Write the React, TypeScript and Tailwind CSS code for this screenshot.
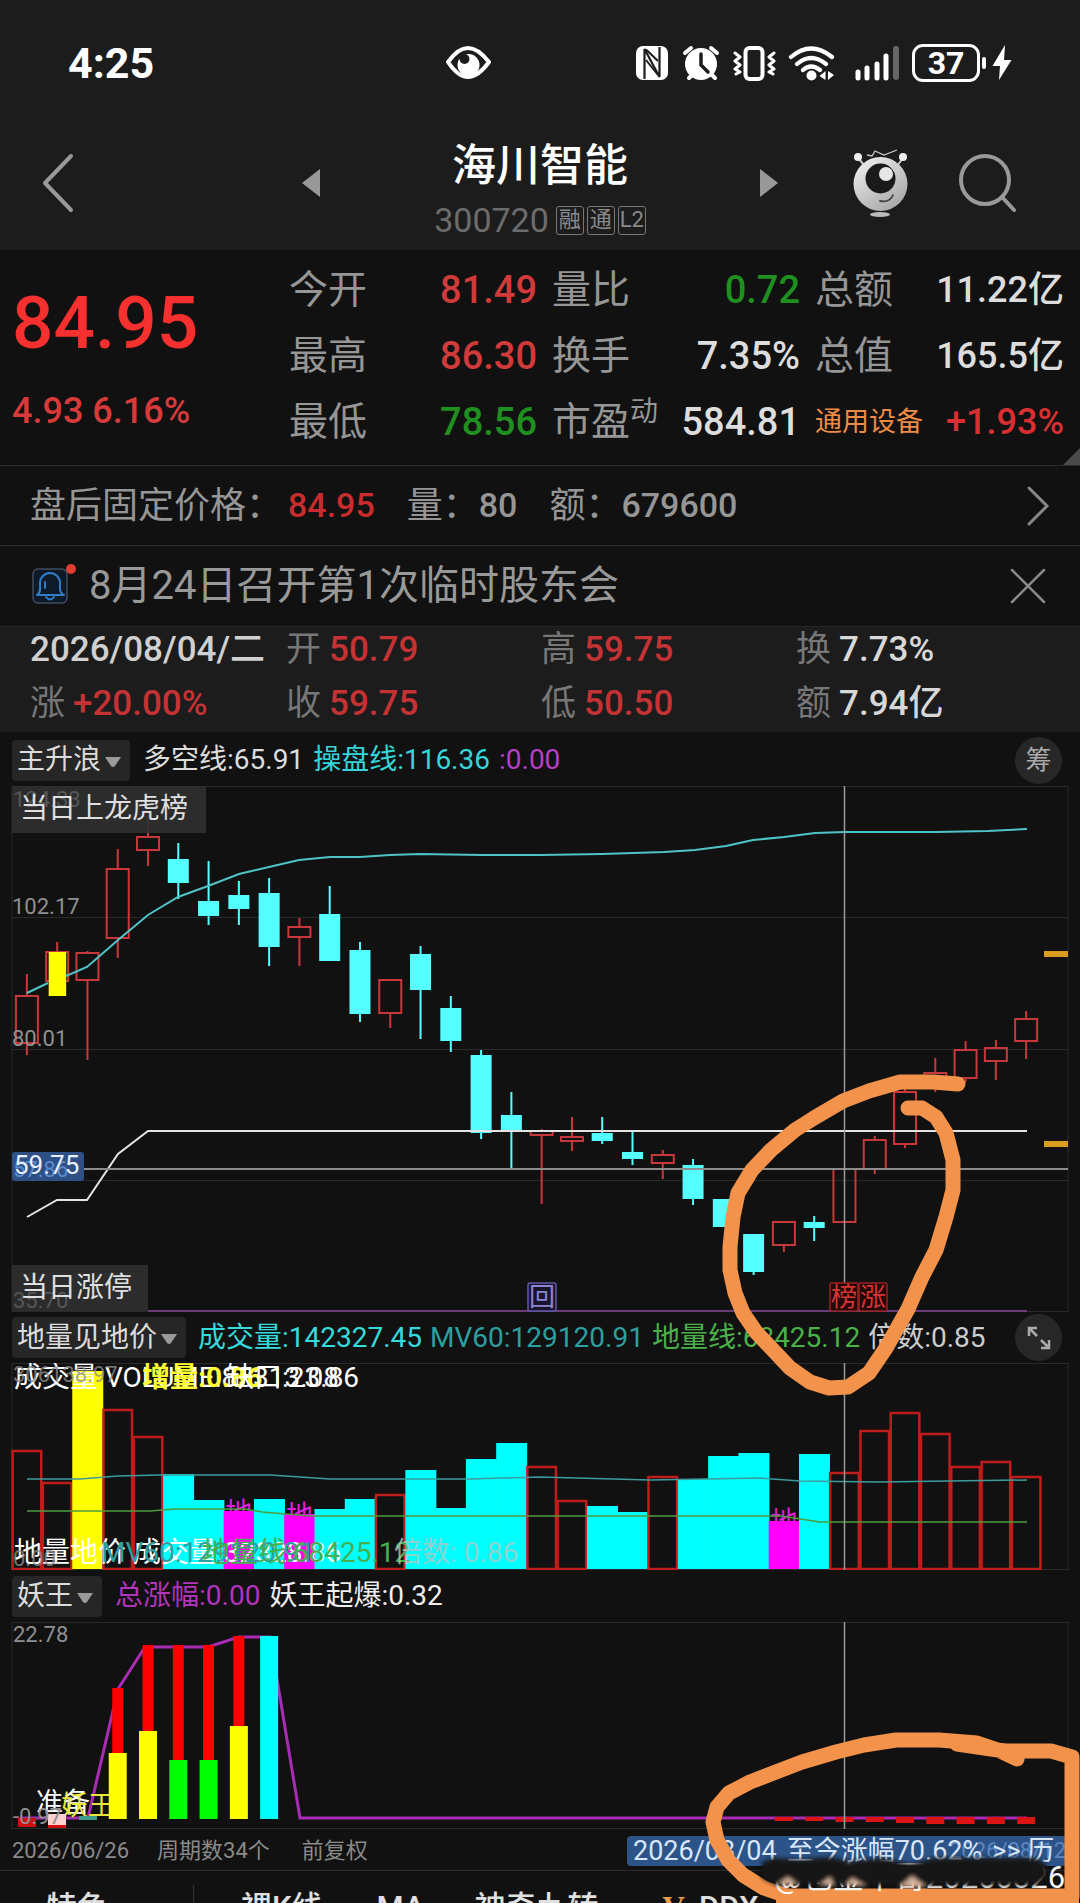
import type { ReactNode } from 'react';

const SANS = "font-[Roboto,'Noto_Sans_CJK_SC',sans-serif]";
const PITCH = 30.28;
const cx = (i: number) => 26.9 + i * PITCH;

type Candle = ['r' | 'c' | 'y', number, number, number, number];

/* kind, high, body top, body bottom, low */
const candles: Candle[] = [
  ['r', 974, 996, 1043, 1055],
  ['y', 942, 952, 981, 981],
  ['r', 951, 953, 980, 1060],
  ['r', 849, 869, 938, 958],
  ['r', 812, 837, 850, 866],
  ['c', 843, 859, 883, 899],
  ['c', 861, 901, 916, 925],
  ['c', 881, 895, 909, 925],
  ['c', 878, 893, 947, 966],
  ['r', 918, 927, 937, 966],
  ['c', 886, 914, 961, 961],
  ['c', 942, 950, 1014, 1022],
  ['r', 980, 980, 1013, 1028],
  ['c', 946, 954, 990, 1039],
  ['c', 996, 1008, 1041, 1052],
  ['c', 1050, 1055, 1133, 1139],
  ['c', 1092, 1115, 1132, 1169],
  ['r', 1129, 1131, 1135, 1204],
  ['r', 1117, 1137, 1141, 1151],
  ['c', 1117, 1133, 1141, 1144],
  ['c', 1132, 1152, 1159, 1165],
  ['r', 1150, 1155, 1163, 1179],
  ['c', 1159, 1165, 1199, 1205],
  ['c', 1199, 1199, 1227, 1227],
  ['c', 1234, 1234, 1272, 1275],
  ['r', 1222, 1222, 1245, 1252],
  ['c', 1216, 1222, 1228, 1241],
  ['r', 1169, 1169, 1222, 1222],
  ['r', 1136, 1140, 1169, 1174],
  ['r', 1089, 1092, 1144, 1148],
  ['r', 1058, 1073, 1085, 1092],
  ['r', 1041, 1050, 1078, 1082],
  ['r', 1040, 1048, 1061, 1080],
  ['r', 1011, 1019, 1041, 1059],
];

/* kind, top of the volume bar */
const volumes: ['r' | 'c' | 'y' | 'm', number][] = [
  ['r', 1451], ['r', 1483], ['y', 1371], ['r', 1410], ['r', 1437], ['c', 1474], ['c', 1500], ['m', 1511],
  ['c', 1499], ['m', 1514], ['c', 1509], ['c', 1499], ['r', 1495], ['c', 1470], ['c', 1508], ['c', 1459],
  ['c', 1443], ['r', 1467], ['r', 1501], ['c', 1506], ['c', 1512], ['r', 1477], ['c', 1479], ['c', 1456],
  ['c', 1453], ['m', 1521], ['c', 1454], ['r', 1473], ['r', 1431], ['r', 1413], ['r', 1434], ['r', 1467],
  ['r', 1462], ['r', 1477],
];

const volumeFill = { c: '#00ffff', y: '#ffff00', m: '#ff00ff', r: 'none' };

function StatusIcons() {
  return (
    <div className="flex items-center text-white">
      <svg className="h-9 w-8" viewBox="636 44 32 36" aria-label="NFC">
        <rect x="636" y="45" width="32" height="34" rx="7" fill="#fff" />
        <path d="M644.500 78V48L659.500 76V46" stroke="#1c1c1c" strokeWidth="2.200" fill="none" />
        <path d="M646 48.500 658 60M646 59 658 74" stroke="#1c1c1c" strokeWidth="2" fill="none" />
      </svg>
      <svg className="ml-3.5 h-9 w-[38px]" viewBox="681 44 38 36" aria-label="闹钟">
        <circle cx="700" cy="63" r="16" fill="#fff" />
        <path d="M684 52 690 47M716 52 710 47M688 77l4-4M714 77l-4-4" stroke="#fff" strokeWidth="4" strokeLinecap="round" />
        <path d="M700 53V64L707 71" stroke="#1c1c1c" strokeWidth="3.5" fill="none" strokeLinecap="round" />
      </svg>
      <svg className="ml-[13px] h-9 w-[43px]" viewBox="732 44 43 36" aria-label="振动">
        <rect x="744.5" y="47" width="17" height="31" rx="4" fill="none" stroke="#fff" strokeWidth="4" />
        <path d="M734 52 739 56 734 60 739 64 734 68 739 71 735 73M773 52 768 56 773 60 768 64 773 68 768 71 772 73" stroke="#fff" strokeWidth="3" fill="none" strokeLinecap="round" strokeLinejoin="round" />
      </svg>
      <svg className="ml-3 h-9 w-[47px]" viewBox="787 44 47 36" aria-label="无线网络">
        <path d="M790 56q20-17 41 0M796 63q14-12 29 0M802 69q8-7 17 0" stroke="#fff" strokeWidth="4.2" fill="none" strokeLinecap="round" />
        <circle cx="810.5" cy="74.500" r="5" fill="#fff" />
        <path d="M824.500 70v9l-6-4ZM827 79V70l6 4Z" fill="#fff" />
      </svg>
      <svg className="ml-5 h-9 w-[45px]" viewBox="854 44 45 36" aria-label="信号">
        <path d="M857 71V77M866 67V77M876 63V77M885 55V77" stroke="#fff" strokeWidth="5" strokeLinecap="round" />
        <path d="M895 48V76" stroke="#666" strokeWidth="6" strokeLinecap="round" />
      </svg>
      <span className="ml-3 flex h-[38px] w-[68px] items-center justify-center rounded-[11px] border-[3px] border-white text-[32px] leading-8 font-bold">
        37
      </span>
      <span className="ml-0.5 h-3 w-1 rounded-full bg-white" />
      <svg className="ml-1.5 h-9 w-5" viewBox="992 44 20 36" aria-label="充电">
        <path d="M1005 44 992.500 65H1000L999 79 1011.500 59H1004Z" fill="#fff" />
      </svg>
    </div>
  );
}

function Mascot() {
  return (
    <svg className="h-[70px] w-14" viewBox="852 147 56 70" aria-hidden="true">
      <defs>
        <linearGradient id="ball" x1="0" y1="0" x2="0.7" y2="1">
          <stop offset="0" stopColor="#f4f4f4" />
          <stop offset="1" stopColor="#a8a8a8" />
        </linearGradient>
      </defs>
      <path d="M867 154l5 1 3-5 9 4 13-5" stroke="#c8c8c8" strokeWidth="1.300" fill="none" />
      <path d="M858 157 865 165M903 157 897 165" stroke="#ccc" strokeWidth="2" />
      <circle cx="858" cy="156" r="4" fill="#eee" />
      <circle cx="903" cy="156" r="4" fill="#eee" />
      <ellipse cx="880" cy="213.500" rx="10" ry="2.600" fill="#bbb" />
      <circle cx="880.5" cy="183" r="27" fill="url(#ball)" />
      <circle cx="880.5" cy="177.500" r="15" fill="#1a1a1a" />
      <circle cx="886" cy="173" r="7" fill="#e6e6e6" />
      <path d="M880 200q10 2 13-6" stroke="#444" strokeWidth="1.800" fill="none" strokeLinecap="round" />
    </svg>
  );
}

function Quote({ label, children, tone, sup }: { label: string; children: ReactNode; tone: string; sup?: string }) {
  return (
    <div className="flex items-center justify-between">
      <dt className="flex text-[39px] leading-[66px] text-[#969696]">
        {label}
        {sup && <span className="text-[28px] leading-[46px]">{sup}</span>}
      </dt>
      <dd className={tone}>{children}</dd>
    </div>
  );
}

function Picker({ label, value }: { label: string; value: string }) {
  return (
    <label className="relative flex h-[41px] shrink-0 rounded bg-[#262626]">
      <span className="sr-only">{label}</span>
      <select className="appearance-none bg-transparent pr-7 pl-[5px] text-[28px] leading-[40px] text-[#dcdcdc]">
        <option>{value}</option>
      </select>
      <svg className="pointer-events-none absolute top-4 right-2 h-3 w-[18px]" viewBox="0 0 18 12" aria-hidden="true">
        <path d="M1 1H17L11 10Q9 12 7 10Z" fill="#9a9a9a" />
      </svg>
    </label>
  );
}

function Frame({ y, h, label, children }: { y: number; h: number; label: string; children: ReactNode }) {
  return (
    <svg className={`block h-auto w-full ${SANS}`} viewBox={`0 ${y} 1080 ${h}`} role="img" aria-label={label}>
      <rect x="12" y={y + 0.5} width="1056" height={h - 1} fill="none" stroke="#2a2a2a" />
      {children}
      <path d={`M844.500 ${y}V${y + h}`} stroke="#9a9a9a" strokeWidth="1.500" />
    </svg>
  );
}

function PriceChart() {
  return (
    <Frame y={786} h={526} label="主升浪">
      <path d="M12 917.500H1068M12 1049.500H1068M12 1180.500H1068" stroke="#2a2a2a" />
      {candles.map(([k, hi, top, bot, lo], i) => {
        const x = cx(i);
        const color = k === 'c' ? '#55ffff' : '#c8383a';
        return (
          <g key={i} stroke={color} strokeWidth="2">
            <path d={`M${x} ${hi}V${top}M${x} ${bot}V${lo}`} />
            {k === 'c' ? (
              <rect x={x - 10.5} y={top} width="21" height={bot - top} fill="#55ffff" stroke="none" />
            ) : (
              <rect x={x - 11} y={top} width="22" height={bot - top} fill="none" />
            )}
            {k === 'y' && <rect x={x - 8.5} y={top} width="17.500" height="44" fill="#ffff00" stroke="none" />}
          </g>
        );
      })}
      <path
        d="M27 993 48 983M66 976 87 967 118 940 148 915 178 897 208 886 239 874 269 867 299 860 330 857H360L390 855 420 854 482 855H540L602 854 664 852 695 850 726 846 753 840 784 837 815 833 845 832H936L988 831 1027 829"
        fill="none" stroke="#4fc4c8" strokeWidth="2"
      />
      <path d="M27 1217 57 1200H87L118 1154 148 1131H1027" fill="none" stroke="#e4e4e4" strokeWidth="2" />
      <path d="M12 1169H1068" stroke="#8c8c8c" strokeWidth="2" />
      <path d="M148 1311H1027" stroke="#6a3c78" strokeWidth="2" />
      <path d="M1044 954H1068M1044 1144H1068" stroke="#dc9c1e" strokeWidth="6" />
      <g fill="#909090" fontSize="22">
        <text x="12" y="914">102.17</text>
        <text x="12" y="1046">80.01</text>
      </g>
      <rect x="12" y="1152" width="72" height="29" rx="3" fill="#2e5084" />
      <text x="13" y="1177" fontSize="22" fill="#5b8bd0">57.86</text>
      <text x="14" y="1174" fontSize="26" fill="#e8f0ff">59.75</text>
      <rect x="12" y="786" width="194" height="47" fill="#303030" fillOpacity="0.9" />
      <text x="13" y="807" fontSize="22" fill="#565656">124.33</text>
      <text x="20" y="818" fontSize="28" fill="#e0e0e0">当日上龙虎榜</text>
      <rect x="12" y="1265" width="136" height="46" fill="#303030" fillOpacity="0.9" />
      <text x="13" y="1308" fontSize="22" fill="#565656">35.70</text>
      <text x="20" y="1297" fontSize="28" fill="#e0e0e0">当日涨停</text>
      <rect x="528" y="1283" width="28" height="28" rx="2" fill="#17142c" stroke="#6358a8" strokeWidth="1.500" />
      <text x="542" y="1306" fontSize="26" textAnchor="middle" fill="#8d84d4">回</text>
    </Frame>
  );
}

function VolumeChart() {
  return (
    <Frame y={1363} h={207} label="地量见地价">
      <g fontSize="27" fill="#e020e0" textAnchor="middle">
        <text x={cx(7)} y="1522">地</text>
        <text x={cx(9)} y="1525">地</text>
        <text x={cx(25)} y="1531">地</text>
      </g>
      {volumes.map(([k, top], i) => (
        <rect
          key={i}
          x={k === 'r' ? cx(i) - 14.3 : cx(i) - 15.2}
          y={top}
          width={k === 'r' ? 28.6 : 31}
          height={1569 - top}
          fill={volumeFill[k]}
          stroke={k === 'r' ? '#c01c1c' : 'none'}
          strokeWidth="2.500"
        />
      ))}
      <path d="M27 1479H80L118 1476 160 1475H270L330 1479H470L540 1477 650 1480 760 1478 800 1481 880 1482 1027 1480" fill="none" stroke="#3c9c9c" strokeWidth="1.500" />
      <path d="M27 1511H150L175 1509H245L262 1512 310 1516H781L820 1522H1027" fill="none" stroke="#4c9c3c" strokeWidth="1.500" />
      <g fontSize="28">
        <text x="14" y="1387" fill="#ffffff">成交量 VOLUME:85313.08</text>
        <text x="142" y="1387" fill="#ffff30" fontWeight="700">增量:0.86</text>
        <text x="226" y="1387" fill="#ffffff">缺口:23.86</text>
        <text x="14" y="1562" fill="#ffffff">地量地价 成交量:32328.86</text>
        <text x="101" y="1562" fill="#2f9fa0">MV60:129120.91</text>
        <text x="202" y="1562" fill="#44b050">地量线:68425.12</text>
        <text x="394" y="1562" fill="#b0c8c4" fillOpacity="0.8">倍数: 0.86</text>
      </g>
      <g fontSize="22" fill="#8c8c8c" fillOpacity="0.8">
        <text x="13" y="1382">306138.97</text>
        <text x="13" y="1566">0.00</text>
      </g>
    </Frame>
  );
}

function MonsterChart() {
  const stacks: [number, number, number, string][] = [
    [3, 1688, 1753, '#ffff00'],
    [4, 1645, 1731, '#ffff00'],
    [5, 1645, 1760, '#00ff00'],
    [6, 1645, 1760, '#00ff00'],
    [7, 1636, 1726, '#ffff00'],
  ];
  return (
    <Frame y={1622} h={207} label="妖王">
      <path d="M20 1818H88L118 1689 145 1647H208L239 1637H270L300 1818H1027" fill="none" stroke="#a82cb4" strokeWidth="3" />
      <text x="36" y="1812" fontSize="27" fill="#ffffff">准备</text>
      <text x="61" y="1815" fontSize="27" fill="#e8e83c">妖王</text>
      {stacks.map(([i, red, low, color]) => (
        <g key={i}>
          <rect x={cx(i) - 5.5} y={red} width="11" height={low - red} fill="#ff0000" />
          <rect x={cx(i) - 9} y={low} width="18" height={1819 - low} fill={color} />
        </g>
      ))}
      <rect x={cx(8) - 9} y="1636" width="18" height="183" fill="#00ffff" />
      <rect x="18" y="1818" width="18" height="9" fill="#d01010" />
      <rect x="48" y="1814" width="18" height="13" fill="#ffd0d0" />
      <rect x="48" y="1825" width="18" height="3" fill="#d01010" />
      <rect x="79" y="1816" width="18" height="4" fill="#3c9c8c" />
      {[4, 4, 5, 5, 6, 7, 7, 7, 7].map((h, k) => (
        <rect key={k} x={cx(25 + k) - 9} y="1817" width="18" height={h} fill="#dc1414" />
      ))}
      <text x="13" y="1642" fontSize="22" fill="#909090">22.78</text>
      <text x="13" y="1824" fontSize="22" fill="#909090">-0.97</text>
    </Frame>
  );
}

function Annotations() {
  return (
    <svg className={`pointer-events-none absolute inset-0 h-full w-full ${SANS}`} viewBox="0 732 1080 1171" aria-hidden="true">
      <defs>
        <filter id="smudge" x="-5%" y="-50%" width="110%" height="200%">
          <feGaussianBlur stdDeviation="2" />
        </filter>
      </defs>
      <g fontSize="26" fill="#d83434">
        <rect x="830" y="1283" width="28" height="28" rx="2" fill="#240808" stroke="#9a2020" strokeWidth="1.500" />
        <rect x="859" y="1283" width="28" height="28" rx="2" fill="#240808" stroke="#9a2020" strokeWidth="1.500" />
        <text x="831" y="1306">榜</text>
        <text x="860" y="1306">涨</text>
      </g>
      <g fill="none" stroke="#f3924a" strokeWidth="15" strokeLinecap="round" strokeLinejoin="round">
        <path d="M958 1084 933 1082H900L869 1091 843 1101 814 1118 795 1130 771 1150 752 1170 738 1193 733 1217 730 1247V1270L735 1293 743 1313 756 1332 790 1368 810 1382 829 1388 848 1387 869 1373 886 1348 908 1309 922 1277 936 1250 946 1217 953 1190V1160L946 1133 936 1117 922 1108H908" />
        <path d="M1017 1759 998 1750 977 1743 939 1740H896L864 1745 836 1752 802 1762 750 1782 729 1793 717 1807 713 1822 717 1840 728 1860 743 1875 764 1888 790 1897H1072V1757L1051 1751H1005L957 1744" />
      </g>
      <path d="M776 1896H1079" stroke="#f3924a" strokeWidth="15" />
      <text x="774" y="1888" fontSize="31" fill="#f8f8f8">@也金牛哥20250326</text>
      <g filter="url(#smudge)">
        <path d="M762 1862 775 1858 800 1860 830 1857 850 1862 880 1858 910 1864 935 1858H1035L1046 1864 1048 1876 1036 1885H776L762 1878Z" fill="#141414" />
        <path d="M778 1884 788 1877 798 1885ZM820 1885 830 1877 834 1886ZM846 1885 852 1878 866 1886ZM900 1887 912 1876 926 1887Z" fill="#d8b49c" />
      </g>
    </svg>
  );
}

export default function App() {
  return (
    <main className={`min-h-screen overflow-hidden bg-[#111111] text-[#dddddd] ${SANS}`}>
      <header className="bg-[#1c1c1c]">
        <div className="grid h-[126px] grid-cols-[378px_1fr_auto] items-center pr-[68px] pl-[68px]">
          <time className="text-[43px] leading-none font-bold text-white">4:25</time>
          <svg className="h-[34px] w-[46px]" viewBox="446 46 46 34" aria-hidden="true">
            <path d="M448 62Q458 48 468 48T489 62Q478 77 468 77T448 62Z" fill="none" stroke="#fff" strokeWidth="4" strokeLinejoin="round" />
            <circle cx="468.5" cy="65" r="11" fill="#fff" />
            <circle cx="464.500" cy="59" r="5" fill="#1c1c1c" />
          </svg>
          <StatusIcons />
        </div>
        <div className="grid h-[124px] grid-cols-[1fr_476px_1fr] content-start items-center">
          <button aria-label="返回" className="ml-10 w-9">
            <svg className="h-[60px] w-9" viewBox="0 0 36 60" aria-hidden="true">
              <path d="M31 3 5 30 31 57" fill="none" stroke="#999" strokeWidth="4" strokeLinecap="round" strokeLinejoin="round" />
            </svg>
          </button>
          <div className="flex items-center justify-between">
            <button aria-label="上一只">
              <svg className="h-7 w-[18px]" viewBox="0 0 18 28"><path d="M18 0V28L0 14Z" fill="#999" /></svg>
            </button>
            <div className="mt-3 flex flex-col items-center">
              <h1 className="text-[44px] leading-[56px] font-medium text-white">海川智能</h1>
              <div className="mt-1.5 flex h-10 items-center gap-[3px] text-[34px] text-[#6c6c6c]">
                <span className="mr-1">300720</span>
                {['融', '通', 'L2'].map((t) => (
                  <span key={t} className="flex h-[29px] w-7 items-center justify-center rounded-[3px] border border-[#777] text-[22px] leading-6 text-[#8a8a8a]">
                    {t}
                  </span>
                ))}
              </div>
            </div>
            <button aria-label="下一只">
              <svg className="h-7 w-[18px]" viewBox="0 0 18 28"><path d="M0 0V28L18 14Z" fill="#999" /></svg>
            </button>
          </div>
          <div className="flex items-center justify-end gap-[50px] pr-16">
            <button aria-label="智能助手"><Mascot /></button>
            <button aria-label="搜索">
              <svg className="h-[60px] w-[58px]" viewBox="0 0 58 60" fill="none" stroke="#999" strokeWidth="4" strokeLinecap="round">
                <circle cx="27" cy="27" r="24" />
                <path d="M44 44 56 57" />
              </svg>
            </button>
          </div>
        </div>
      </header>

      <section className="relative flex h-[216px] border-b border-[#2b2b2b] pt-[7px]">
        <div className="w-[289px] shrink-0 pl-3 text-[#f5302e]">
          <p className="pt-7 text-[73px] leading-[76px] font-medium">84.95</p>
          <p className="mt-7 text-[36px] leading-[44px] font-medium text-[#d83a3a]">4.93 6.16%</p>
        </div>
        <dl className="grid flex-1 grid-cols-[248fr_248fr_249fr] content-start gap-x-[15px] pr-4 text-[38px] leading-[66px] [&_dd]:font-medium">
          <Quote label="今开" tone="text-[#d03a3a]">81.49</Quote>
          <Quote label="量比" tone="text-[#1f8f1f]">0.72</Quote>
          <Quote label="总额" tone="text-[36px]">11.22亿</Quote>
          <Quote label="最高" tone="text-[#d03a3a]">86.30</Quote>
          <Quote label="换手" tone="">7.35%</Quote>
          <Quote label="总值" tone="text-[36px]">165.5亿</Quote>
          <Quote label="最低" tone="text-[#1f8f1f]">78.56</Quote>
          <Quote label="市盈" sup="动" tone="">584.81</Quote>
          <div className="flex items-center justify-between">
            <dt className="text-[27px] text-[#ee8b44]"><a href="#sector">通用设备</a></dt>
            <dd className="text-[36px] text-[#d92f33]">+1.93%</dd>
          </div>
        </dl>
        <svg className="absolute right-0 bottom-0 size-[17px]" viewBox="0 0 17 17" aria-hidden="true"><path d="M17 0V17H0Z" fill="#4a4a4a" /></svg>
      </section>

      <a href="#after-hours" className="flex h-20 items-center border-b border-[#2b2b2b] pr-[30px] pl-[30px] text-[36px] text-[#969696]">
        <span>盘后固定价格：</span>
        <span className="ml-1.5 text-[34px] font-medium text-[#c92c2e]">84.95</span>
        <span className="ml-8">量：</span>
        <span className="text-[34px] font-medium">80</span>
        <span className="ml-8">额：</span>
        <span className="text-[34px] font-medium">679600</span>
        <svg className="ml-auto h-10 w-6" viewBox="0 0 24 40" aria-hidden="true">
          <path d="M3 2 21 20 3 38" fill="none" stroke="#888" strokeWidth="3" strokeLinecap="round" />
        </svg>
      </a>

      <div className="flex h-20 items-center pr-[34px] pl-8">
        <span className="relative">
          <svg className="size-9" viewBox="0 0 36 36" fill="none" aria-hidden="true">
            <rect x="1" y="1" width="34" height="34" rx="5" fill="#0f1a28" stroke="#3f4c5c" strokeWidth="1.500" />
            <path d="M5 27C9 25 8 20 8 15a10 10 0 0 1 20 0c0 5-1 10 4 12Z" stroke="#2f7cc8" strokeWidth="2" strokeLinejoin="round" />
            <path d="M13 14V20M14 29q4 5 8 0" stroke="#2f7cc8" strokeWidth="2" strokeLinecap="round" />
          </svg>
          <span className="absolute -top-1 -right-2 size-2.5 rounded-full bg-[#e03c34]" />
        </span>
        <p className="ml-[21px] text-[40px] leading-none text-[#999999]">8月24日召开第1次临时股东会</p>
        <button aria-label="关闭" className="ml-auto">
          <svg className="size-9" viewBox="0 0 36 36"><path d="M2 2 34 34M34 2 2 34" stroke="#888" strokeWidth="2.500" strokeLinecap="round" /></svg>
        </button>
      </div>

      <dl className="grid h-[106px] grid-cols-[256px_255px_255px_1fr] content-start gap-y-2 border-t border-[#262626] bg-[#1c1c1c] pl-[30px] text-[35px] leading-[46px] text-[#c43234] [&_dd]:font-medium [&_dt]:text-[#777] [&>div]:flex [&>div]:gap-2 [&>div]:whitespace-nowrap">
        <div><dd className="text-[#d0d0d0]">2026/08/04/二</dd></div>
        <div><dt>开</dt><dd>50.79</dd></div>
        <div><dt>高</dt><dd>59.75</dd></div>
        <div><dt>换</dt><dd className="text-[#d8d8d8]">7.73%</dd></div>
        <div><dt>涨</dt><dd>+20.00%</dd></div>
        <div><dt>收</dt><dd>59.75</dd></div>
        <div><dt>低</dt><dd>50.50</dd></div>
        <div><dt>额</dt><dd className="text-[#d8d8d8]">7.94亿</dd></div>
      </dl>

      <section className="relative">
        <div className="flex h-[54px] items-center gap-[9px] pr-[18px] pl-3 pt-0.5 text-[28px] whitespace-nowrap">
          <Picker label="主图指标" value="主升浪" />
          <span className="ml-1">多空线:65.91</span>
          <span className="text-[#35d5da]">操盘线:116.36</span>
          <span className="text-[#b63fc4]">:0.00</span>
          <button className="ml-auto size-[47px] rounded-full bg-[#272727] text-[26px] text-[#aaaaaa]">筹</button>
        </div>
        <PriceChart />
        <div className="flex h-[51px] items-center gap-2 pr-[18px] pl-3 text-[28px] whitespace-nowrap">
          <Picker label="副图指标一" value="地量见地价" />
          <span className="ml-1 text-[#35dadc]">成交量:142327.45</span>
          <span className="text-[#2c9f9f]">MV60:129120.91</span>
          <span className="text-[#4cb04a]">地量线:68425.12</span>
          <span className="text-[#cccccc]">倍数:0.85</span>
          <button aria-label="全屏" className="ml-auto flex size-[47px] items-center justify-center rounded-full bg-[#272727]">
            <svg className="size-6" viewBox="0 0 24 24" fill="none" stroke="#aaa" strokeWidth="2.500">
              <path d="M2 10V2H10M2 2 10 10M22 14V22H14M22 22 14 14" />
            </svg>
          </button>
        </div>
        <VolumeChart />
        <div className="flex h-[52px] items-center gap-[9px] pr-[18px] pl-3 text-[28px] whitespace-nowrap">
          <Picker label="副图指标二" value="妖王" />
          <span className="ml-1 text-[#b034bc]">总涨幅:0.00</span>
          <span className="text-[#eeeeee]">妖王起爆:0.32</span>
        </div>
        <MonsterChart />
        <div className="flex h-[42px] items-center border-b border-[#2b2b2b] pr-3.5 pl-3 pt-0.5 text-[22px] whitespace-nowrap text-[#8a8a8a]">
          <span>2026/06/26</span>
          <span className="ml-7">周期数34个</span>
          <span className="ml-8">前复权</span>
          <button className="relative ml-auto flex h-[30px] w-[439px] items-center gap-2.5 overflow-hidden rounded bg-[#2d5488] px-1.5 text-[27px] leading-[30px] text-[#d8e6fa]">
            <span className="absolute right-0 text-[22px] text-[#5c86c0]">2026/08/12</span>
            <span className="relative">2026/08/04</span>
            <span className="relative">至今涨幅70.62%</span>
            <span className="relative">&gt;&gt; 历</span>
          </button>
        </div>
        <nav className="flex h-8 items-start overflow-hidden pt-3.5 pl-[46px] text-[31px] leading-[46px] font-medium whitespace-nowrap text-[#e0e0e0]">
          <button>特色</button>
          <span className="ml-[85px] h-10 w-px bg-[#333]" />
          <button className="ml-[47px]">裸K线</button>
          <button className="ml-[54px]">MA</button>
          <button className="ml-[50px]">神奇九转</button>
          <button className="ml-[64px] flex gap-3.5">
            <span className="font-['Liberation_Serif',serif] font-bold text-[#e8a04c]">V</span>
            DDX
          </button>
        </nav>
        <Annotations />
      </section>
    </main>
  );
}
